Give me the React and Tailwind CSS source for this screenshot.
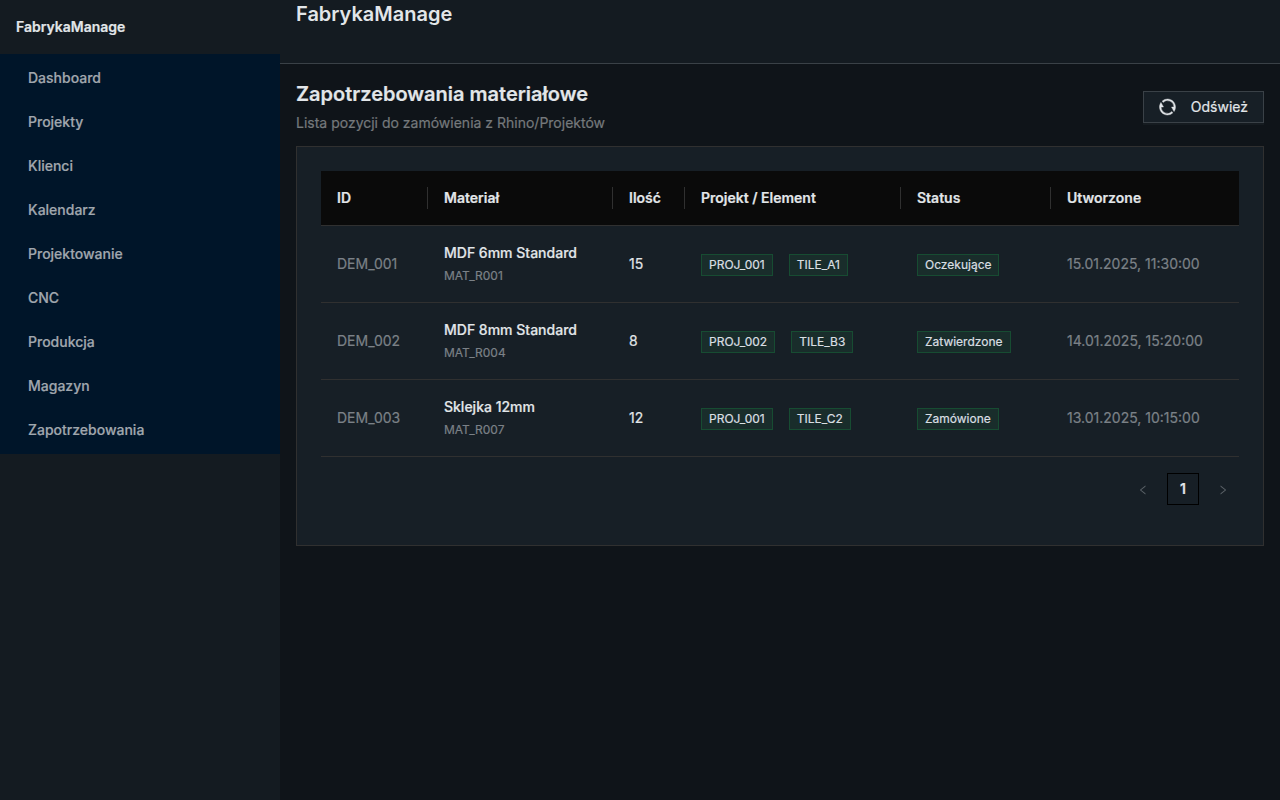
import { AiOutlineLeft, AiOutlineRight } from "react-icons/ai";

const menu = [
  "Dashboard",
  "Projekty",
  "Klienci",
  "Kalendarz",
  "Projektowanie",
  "CNC",
  "Produkcja",
  "Magazyn",
  "Zapotrzebowania",
];

const columns = [
  { title: "ID", width: "w-[107px]" },
  { title: "Materiał", width: "w-[185px]" },
  { title: "Ilość", width: "w-[72px]" },
  { title: "Projekt / Element", width: "w-[216px]" },
  { title: "Status", width: "w-[150px]" },
  { title: "Utworzone", width: "w-[188px]" },
];

const rows = [
  { id: "DEM_001", name: "MDF 6mm Standard", code: "MAT_R001", qty: 15, project: "PROJ_001", element: "TILE_A1", status: "Oczekujące", created: "15.01.2025, 11:30:00" },
  { id: "DEM_002", name: "MDF 8mm Standard", code: "MAT_R004", qty: 8, project: "PROJ_002", element: "TILE_B3", status: "Zatwierdzone", created: "14.01.2025, 15:20:00" },
  { id: "DEM_003", name: "Sklejka 12mm", code: "MAT_R007", qty: 12, project: "PROJ_001", element: "TILE_C2", status: "Zamówione", created: "13.01.2025, 10:15:00" },
];

function RefreshIcon() {
  return (
    <svg viewBox="2 2 20 20" fill="currentColor" stroke="currentColor" strokeWidth="0.5" aria-hidden="true" className="h-4 w-[17px] overflow-visible">
      <path d="M5.463 4.433A9.961 9.961 0 0 1 12 2c5.523 0 10 4.477 10 10 0 2.136-.67 4.116-1.81 5.74L17 12h3A8 8 0 0 0 6.46 6.228l-.997-1.795zm13.074 15.134A9.961 9.961 0 0 1 12 22C6.477 22 2 17.523 2 12c0-2.136.67-4.116 1.81-5.74L7 12H4a8 8 0 0 0 13.54 5.772l.997 1.795z" />
    </svg>
  );
}

function Tag({ children }) {
  return (
    <span className="inline-block border border-[#174c32] bg-[#192d2b] px-[7px] text-xs leading-5 text-[#d9dfe2]">
      {children}
    </span>
  );
}

function Sidebar() {
  return (
    <aside className="w-[280px] shrink-0 bg-[#141b21] [-webkit-text-stroke:0.2px]">
      <div className="p-4 font-semibold">FabrykaManage</div>
      <nav className="bg-[#001529] py-0.5 font-medium">
        <ul>
          {menu.map((item) => (
            <li key={item} className="px-1 py-0.5">
              <a href="#" className="block px-6 leading-10 text-[#a0a7ae]">
                {item}
              </a>
            </li>
          ))}
        </ul>
      </nav>
    </aside>
  );
}

function DemandTable() {
  return (
    <table className="w-full border-collapse text-left">
      <thead>
        <tr className="border-b border-[#303030] bg-[#0a0a0a]">
          {columns.map((column, i) => (
            <th key={column.title} scope="col" className={"py-4 font-semibold " + column.width}>
              <div
                className={
                  i < columns.length - 1 ? "border-r border-[#303030] px-4" : "px-4"
                }
              >
                {column.title}
              </div>
            </th>
          ))}
        </tr>
      </thead>
      <tbody>
        {rows.map((row) => (
          <tr key={row.id} className="border-b border-[#303030]">
            <td className="p-4 text-[#7b8187]">{row.id}</td>
            <td className="p-4">
              <div className="font-medium">{row.name}</div>
              <div className="text-[#7b8187]">
                <span className="text-xs">{row.code}</span>
              </div>
            </td>
            <td className="p-4">{row.qty}</td>
            <td className="space-x-4 p-4 whitespace-nowrap">
              <Tag>{row.project}</Tag>
              <Tag>{row.element}</Tag>
            </td>
            <td className="p-4">
              <Tag>{row.status}</Tag>
            </td>
            <td className="p-4 text-[#7b8187]">{row.created}</td>
          </tr>
        ))}
      </tbody>
    </table>
  );
}

function Pagination() {
  return (
    <nav aria-label="Paginacja" className="my-4 flex justify-end gap-2">
      <button type="button" disabled aria-label="Poprzednia strona" className="size-8 pt-0.5 text-[#5a6167]">
        <AiOutlineLeft className="mx-auto size-3" />
      </button>
      <button type="button" aria-current="page" className="size-8 border border-black font-semibold">
        1
      </button>
      <button type="button" disabled aria-label="Następna strona" className="size-8 pt-0.5 text-[#5a6167]">
        <AiOutlineRight className="mx-auto size-3" />
      </button>
    </nav>
  );
}

export default function App() {
  return (
    <div className="flex min-h-screen bg-[#0f1419] font-['Inter',sans-serif] text-sm leading-[22px] text-[#e2e6e9]">
      <Sidebar />
      <div className="flex min-w-0 flex-1 flex-col">
        <header className="h-16 border-b border-[#3a4147] bg-[#141b21] px-4">
          <div className="text-xl leading-7 font-semibold">FabrykaManage</div>
        </header>
        <main className="p-4 [-webkit-text-stroke:0.2px]">
          <div className="mb-3 flex items-center justify-between">
            <div className="flex flex-col gap-1">
              <h1 className="text-xl leading-7 font-semibold">Zapotrzebowania materiałowe</h1>
              <p className="text-[#75797c]">Lista pozycji do zamówienia z Rhino/Projektów</p>
            </div>
            <button
              type="button"
              className="flex h-8 items-center gap-[15px] border border-[#3a4147] bg-[#171f26] px-[15px] shadow-[0_2px_0_#151b20]"
            >
              <RefreshIcon />
              Odśwież
            </button>
          </div>
          <section className="border border-[#303030] bg-[#171f26] p-6">
            <DemandTable />
            <Pagination />
          </section>
        </main>
      </div>
    </div>
  );
}
